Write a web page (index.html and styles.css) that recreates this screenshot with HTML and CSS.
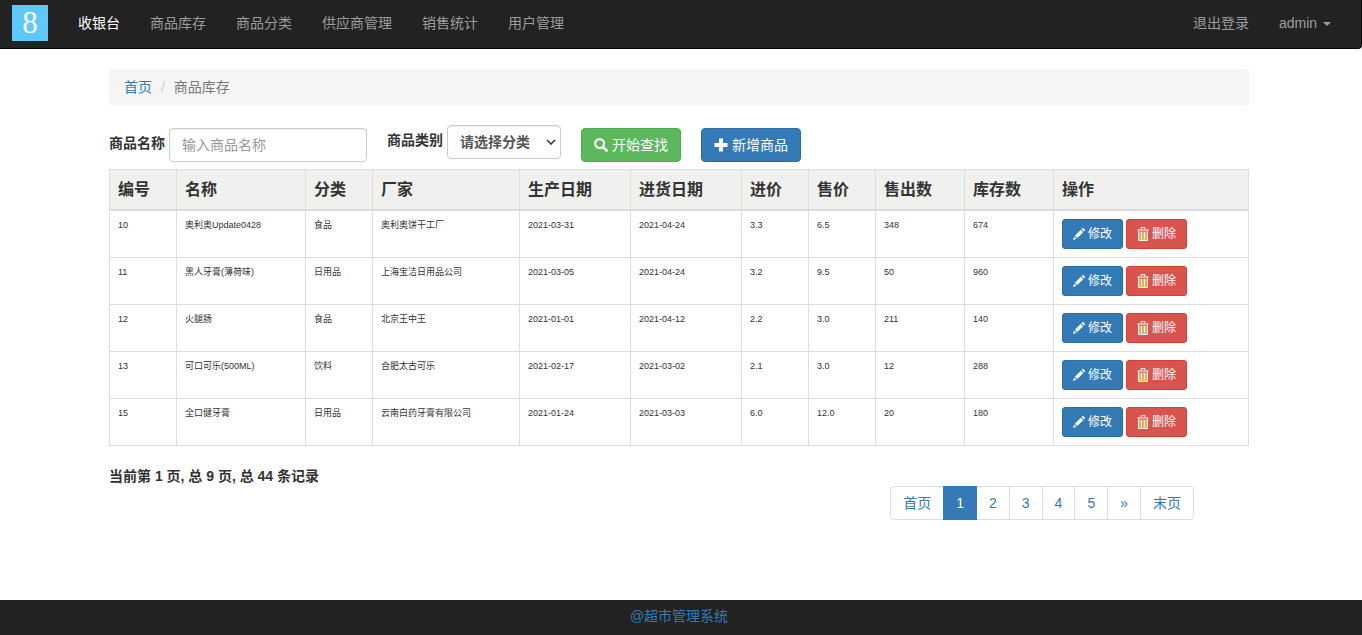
FILE: index.html
```html
<!DOCTYPE html>
<html lang="zh-CN">

<head>
  <meta charset="UTF-8" />
  <meta name="viewport" content="width=device-width, initial-scale=1.0" />
  <title>超市管理系统</title>
  <link rel="stylesheet" href="styles.css">
</head>

<body>
  <!-- 图标 -->
  <svg class="sprite">
    <symbol id="icon-search" viewBox="0 0 14 14">
      <circle cx="5.6" cy="5.6" r="4.5" fill="none" stroke="currentColor" stroke-width="2.1" />
      <path d="M9.200 9.200l3.400 3.400" stroke="currentColor" stroke-width="2.700" stroke-linecap="round" />
    </symbol>
    <symbol id="icon-plus" viewBox="0 0 14 14">
      <path d="M5 .5h4V5h4.500v4H9v4.500H5V9H.5V5H5z" fill="currentColor" />
    </symbol>
    <symbol id="icon-pencil" viewBox="0 0 12 12">
      <path d="M0 12l1.200-3.600 2.400 2.400zM1.900 7.700l5.900-5.900 2.400 2.400-5.900 5.900zM8.500 1.100L9.300.3q.6-.5 1.200 0l1.200 1.200q.5.600 0 1.200l-.8.800z" fill="currentColor" />
    </symbol>
    <symbol id="icon-trash" viewBox="0 0 12 14">
      <path d="M2 4.500h8V13H2z" fill="#f0ad4e" />
      <path d="M4 2.500V.6h4v1.900M.4 3h11.200M1.500 3.500v9.900h9V3.500M4.500 5v7M7.500 5v7" fill="none" stroke="currentColor" />
    </symbol>
  </svg>

  <!-- 导航栏 -->
  <nav class="navbar">
    <a class="brand" href="#">
      <svg class="logo" viewBox="0 0 36 36">
        <rect width="36" height="36" fill="#5fc9ff" />
        <text x="18" y="28" text-anchor="middle">8</text>
      </svg>
    </a>
    <ul class="nav">
      <li><a class="active" href="#">收银台</a></li>
      <li><a href="#">商品库存</a></li>
      <li><a href="#">商品分类</a></li>
      <li><a href="#">供应商管理</a></li>
      <li><a href="#">销售统计</a></li>
      <li><a href="#">用户管理</a></li>
    </ul>
    <ul class="nav nav-right">
      <li><a href="#">退出登录</a></li>
      <li><a href="#">admin <span class="caret"></span></a></li>
    </ul>
  </nav>

  <div class="main">
    <div class="container">
      <ol class="breadcrumb">
        <li><a href="#">首页</a></li>
        <li>商品库存</li>
      </ol>

      <!-- 查询条件 -->
      <form class="search">
        <div class="group group-name">
          <label for="pname">商品名称</label>
          <input type="text" id="pname" placeholder="输入商品名称" />
        </div>
        <div class="group group-type">
          <label for="ptype">商品类别</label>
          <div class="select-box">
            <select id="ptype">
              <option>请选择分类</option>
              <option>食品</option>
              <option>日用品</option>
              <option>饮料</option>
            </select>
            <svg class="arrow" viewBox="0 0 10 6"><path d="M1 1l4 4 4-4" /></svg>
          </div>
        </div>
        <button type="button" class="btn btn-success"><svg class="icon"><use href="#icon-search" /></svg>开始查找</button>
        <button type="button" class="btn btn-primary"><svg class="icon"><use href="#icon-plus" /></svg>新增商品</button>
      </form>

      <!-- 商品列表 -->
      <table class="table">
        <colgroup>
          <col class="col-s"><col class="col-name"><col class="col-s"><col class="col-factory">
          <col class="col-date"><col class="col-date"><col class="col-s"><col class="col-s">
          <col class="col-num"><col class="col-num"><col>
        </colgroup>
        <thead>
          <tr>
            <th>编号</th>
            <th>名称</th>
            <th>分类</th>
            <th>厂家</th>
            <th>生产日期</th>
            <th>进货日期</th>
            <th>进价</th>
            <th>售价</th>
            <th>售出数</th>
            <th>库存数</th>
            <th>操作</th>
          </tr>
        </thead>
        <tbody id="list"></tbody>
      </table>

      <p class="total">当前第 1 页, 总 9 页, 总 44 条记录</p>
      <ul class="pagination">
        <li><a href="#">首页</a></li>
        <li><a class="active" href="#">1</a></li>
        <li><a href="#">2</a></li>
        <li><a href="#">3</a></li>
        <li><a href="#">4</a></li>
        <li><a href="#">5</a></li>
        <li><a href="#">»</a></li>
        <li><a href="#">末页</a></li>
      </ul>
    </div>
  </div>

  <footer class="footer"><a href="#">@超市管理系统</a></footer>

  <script>
    // 商品数据
    let products = [
      ['10', '奥利奥Update0428', '食品', '奥利奥饼干工厂', '2021-03-31', '2021-04-24', '3.3', '6.5', '348', '674'],
      ['11', '黑人牙膏(薄荷味)', '日用品', '上海宝洁日用品公司', '2021-03-05', '2021-04-24', '3.2', '9.5', '50', '960'],
      ['12', '火腿肠', '食品', '北京王中王', '2021-01-01', '2021-04-12', '2.2', '3.0', '211', '140'],
      ['13', '可口可乐(500ML)', '饮料', '合肥太古可乐', '2021-02-17', '2021-03-02', '2.1', '3.0', '12', '288'],
      ['15', '全口健牙膏', '日用品', '云南白药牙膏有限公司', '2021-01-24', '2021-03-03', '6.0', '12.0', '20', '180'],
    ]
    let list = document.querySelector('#list')

    // 渲染函数
    function render() {
      list.innerHTML = ''
      for (let i = 0; i < products.length; i++) {
        let tr = document.createElement('tr')
        tr.innerHTML = products[i].map(v => `<td>${v}</td>`).join('') + `
          <td>
            <div class="actions">
              <button type="button" class="btn btn-sm btn-primary"><svg class="icon"><use href="#icon-pencil" /></svg>修改</button>
              <button type="button" class="btn btn-sm btn-danger"><svg class="icon"><use href="#icon-trash" /></svg>删除</button>
            </div>
          </td>`
        list.appendChild(tr)
      }
    }
    render()
  </script>
</body>

</html>
```
FILE: styles.css
```css
* {
  box-sizing: border-box;
  margin: 0;
  padding: 0;
}

body {
  display: flex;
  flex-direction: column;
  min-height: 100vh;
  font: 14px/20px "Liberation Sans", "Noto Sans CJK SC", sans-serif;
  color: #333;
  background: #fff;
}

ul,
ol {
  list-style: none;
}

a {
  color: #337ab7;
  text-decoration: none;
}

input,
select,
button {
  font: inherit;
}

.sprite {
  display: none;
}

/* 导航栏 */
.navbar {
  display: flex;
  padding: 0 15px 0 12px;
  background: #222;
  border-right: 1px solid #080808;
  border-bottom: 1px solid #080808;
  border-radius: 0 0 4px 0;
}

.brand {
  margin-right: 15px;
  padding-top: 5px;
}

.logo {
  display: block;
  width: 36px;
  height: 36px;
}

.logo text {
  font: 31px "Liberation Serif", serif;
  fill: #fff;
}

.nav {
  display: flex;
}

.nav-right {
  margin-left: auto;
}

.nav a {
  display: block;
  padding: 13px 15px 15px;
  color: #9d9d9d;
}

.nav a:hover,
.nav a.active {
  color: #fff;
}

.caret {
  display: inline-block;
  margin-left: 2px;
  vertical-align: middle;
  border-top: 4px solid;
  border-left: 4px solid transparent;
  border-right: 4px solid transparent;
}

/* 主体 */
.main {
  flex: 1;
  padding: 20px 4px 20px 0;
}

.container {
  max-width: 1140px;
  margin: 0 auto;
}

.breadcrumb {
  display: flex;
  padding: 8px 15px;
  margin-bottom: 20px;
  color: #777;
  background: #f5f5f5;
  border-radius: 4px;
}

.breadcrumb li + li::before {
  content: "/\00a0";
  padding: 0 5px 0 9px;
  color: #ccc;
}

/* 查询条件 */
.search {
  display: flex;
  align-items: flex-end;
  gap: 20px;
  padding-bottom: 7px;
}

.group {
  display: flex;
  gap: 4px;
}

.group-type {
  padding-bottom: 3px;
}

.group label {
  font-weight: bold;
  line-height: 30px;
}

.group input,
.group select {
  height: 34px;
  padding: 6px 12px;
  color: #555;
  background: #fff;
  border: 1px solid #ccc;
  border-radius: 4px;
  box-shadow: inset 0 1px 1px rgba(0, 0, 0, 0.075);
}

.group input {
  width: 198px;
}

.group input::placeholder {
  color: #999;
}

.select-box {
  position: relative;
}

.group select {
  width: 114px;
  font-weight: bold;
  appearance: none;
}

.arrow {
  position: absolute;
  right: 5px;
  top: 14px;
  width: 10px;
  height: 6px;
  fill: none;
  stroke: #333;
  stroke-width: 1.5;
  pointer-events: none;
}

/* 按钮 */
.btn {
  display: flex;
  align-items: center;
  gap: 4px;
  height: 34px;
  padding: 0 12px;
  color: #fff;
  border: 1px solid;
  border-radius: 4px;
  cursor: pointer;
}

.btn-success {
  background: #5cb85c;
  border-color: #4cae4c;
}

.btn-primary {
  background: #337ab7;
  border-color: #2e6da4;
}

.btn-danger {
  background: #d9534f;
  border-color: #d43f3a;
}

.btn .icon {
  width: 14px;
  height: 14px;
}

.btn-sm {
  gap: 3px;
  height: 30px;
  padding: 0 10px;
  font-size: 12px;
  border-radius: 3px;
}

.btn-sm .icon {
  width: 12px;
}

/* 商品列表 */
.table {
  width: 100%;
  table-layout: fixed;
  border-collapse: collapse;
}

.col-s {
  width: 67px;
}

.col-name {
  width: 129px;
}

.col-factory {
  width: 147px;
}

.col-date {
  width: 111px;
}

.col-num {
  width: 89px;
}

.table th,
.table td {
  padding: 8px;
  text-align: left;
  vertical-align: top;
  border: 1px solid #ddd;
}

.table th {
  font-size: 16px;
  line-height: 23px;
  background: #f0f0ee;
  border-bottom-width: 2px;
}

.table td {
  font-size: 9px;
  line-height: 13px;
}

.actions {
  display: flex;
  gap: 3px;
}

/* 分页 */
.total {
  margin-top: 20px;
  font-weight: bold;
}

.pagination {
  display: flex;
  justify-content: flex-end;
  padding-right: 55px;
}

.pagination a {
  display: block;
  padding: 6px 12px;
  margin-left: -1px;
  border: 1px solid #ddd;
}

.pagination li:first-child a {
  border-radius: 4px 0 0 4px;
}

.pagination li:last-child a {
  border-radius: 0 4px 4px 0;
}

.pagination a.active {
  position: relative;
  color: #fff;
  background: #337ab7;
  border-color: #337ab7;
}

/* 页脚 */
.footer {
  padding: 6px 4px 9px 0;
  text-align: center;
  background: #222;
}
```
